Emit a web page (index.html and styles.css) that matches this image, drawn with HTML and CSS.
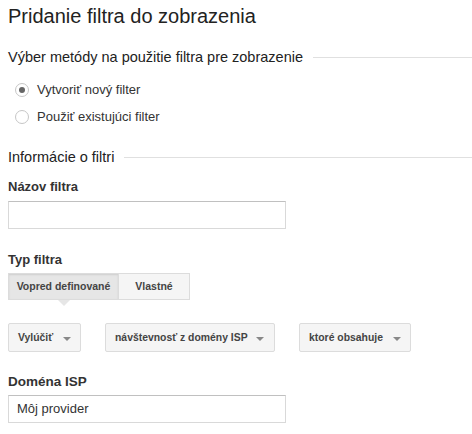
FILE: index.html
```html
<!DOCTYPE html>
<html lang="sk">
<head>
<meta charset="UTF-8">
<title>Pridanie filtra do zobrazenia</title>
<link rel="stylesheet" href="styles.css">
</head>
<body>

<h1 class="title">Pridanie filtra do zobrazenia</h1>

<div class="section">
  <h2 class="section-head">Výber metódy na použitie filtra pre zobrazenie</h2>
  <div class="radios">
    <label class="radio"><span class="dot checked"></span>Vytvoriť nový filter</label>
    <label class="radio"><span class="dot"></span>Použiť existujúci filter</label>
  </div>
</div>

<div class="section">
  <h2 class="section-head info-head">Informácie o filtri</h2>

  <div class="field-label name-label">Názov filtra</div>
  <div class="text-input"></div>

  <div class="field-label type-label">Typ filtra</div>
  <div class="seg">
    <div class="seg-btn active">Vopred definované</div>
    <div class="seg-btn">Vlastné</div>
  </div>

  <div class="selects">
    <div class="select sel-action">Vylúčiť <span class="arrow"></span></div>
    <div class="select sel-field">návštevnosť z domény ISP <span class="arrow"></span></div>
    <div class="select sel-match">ktoré obsahuje <span class="arrow"></span></div>
  </div>

  <div class="field-label isp-label">Doména ISP</div>
  <div class="text-input">Môj provider</div>
</div>

</body>
</html>
```

FILE: styles.css
```css
body {
  margin: 0;
  padding: 0 8px;
  font-family: "Liberation Sans", Arial, sans-serif;
  color: #222;
  background: #fff;
}
.title { font-size: 20px; font-weight: normal; margin: 0; padding-top: 4px; line-height: 24px; color: #222; }

.section-head {
  display: flex;
  align-items: center;
  font-size: 14.5px;
  font-weight: normal;
  margin: 20px 0 0;
  line-height: 18px;
  color: #222;
  white-space: nowrap;
}
.section-head::after {
  content: "";
  flex: 1;
  border-top: 1px solid #e0e0e0;
  margin-left: 10px;
  margin-right: -8px;
}
.info-head { margin-top: 18px; }

.radios { margin-top: 10px; }
.radio {
  display: flex;
  align-items: center;
  font-size: 13px;
  color: #333;
  height: 27px;
  padding-left: 7px;
}
.dot {
  width: 14px;
  height: 14px;
  border: 1px solid #c6c6c6;
  border-radius: 50%;
  box-sizing: border-box;
  margin-right: 8px;
  display: flex;
  align-items: center;
  justify-content: center;
  background: #fff;
}
.dot.checked::after {
  content: "";
  width: 6px;
  height: 6px;
  border-radius: 50%;
  background: #666;
}

.field-label { font-size: 13px; font-weight: bold; color: #333; line-height: 16px; }
.name-label { margin-top: 13px; }
.type-label { margin-top: 23px; }
.isp-label { margin-top: 22px; font-size: 13.5px; }

.text-input {
  width: 278px;
  height: 28px;
  box-sizing: border-box;
  border: 1px solid #d9d9d9;
  border-top-color: #c0c0c0;
  font-size: 13px;
  color: #333;
  line-height: 26px;
  padding-left: 8px;
}
.name-label + .text-input { margin-top: 6px; }
.isp-label + .text-input { margin-top: 5px; }

.seg { display: flex; margin-top: 5px; }
.seg-btn {
  position: relative;
  font-size: 10.5px;
  font-weight: bold;
  color: #444;
  height: 27px;
  line-height: 25px;
  box-sizing: border-box;
  width: 71px;
  text-align: center;
  white-space: nowrap;
  border: 1px solid #dcdcdc;
  background: #f5f5f5;
}
.seg-btn + .seg-btn { border-left: none; }
.seg-btn.active { background: #e6e6e6; box-shadow: inset 0 1px 2px rgba(0,0,0,0.1); width: 111px; }
.seg-btn.active::after {
  content: "";
  position: absolute;
  left: 50%;
  bottom: -7px;
  margin-left: -6px;
  border-left: 6px solid transparent;
  border-right: 6px solid transparent;
  border-top: 6px solid #e6e6e6;
}

.selects { display: flex; gap: 24px; margin-top: 23px; }
.select {
  display: flex;
  align-items: center;
  justify-content: space-between;
  height: 29px;
  box-sizing: border-box;
  padding: 0 9px;
  font-size: 10.4px;
  font-weight: bold;
  color: #444;
  white-space: nowrap;
  background: #f5f5f5;
  border: 1px solid #dcdcdc;
  border-radius: 2px;
}
.sel-action { width: 73px; }
.sel-field { width: 170px; padding-right: 10px; }
.sel-match { width: 112px; }
.arrow {
  border-left: 4px solid transparent;
  border-right: 4px solid transparent;
  border-top: 4px solid #888;
  margin-top: 2px;
}
```
